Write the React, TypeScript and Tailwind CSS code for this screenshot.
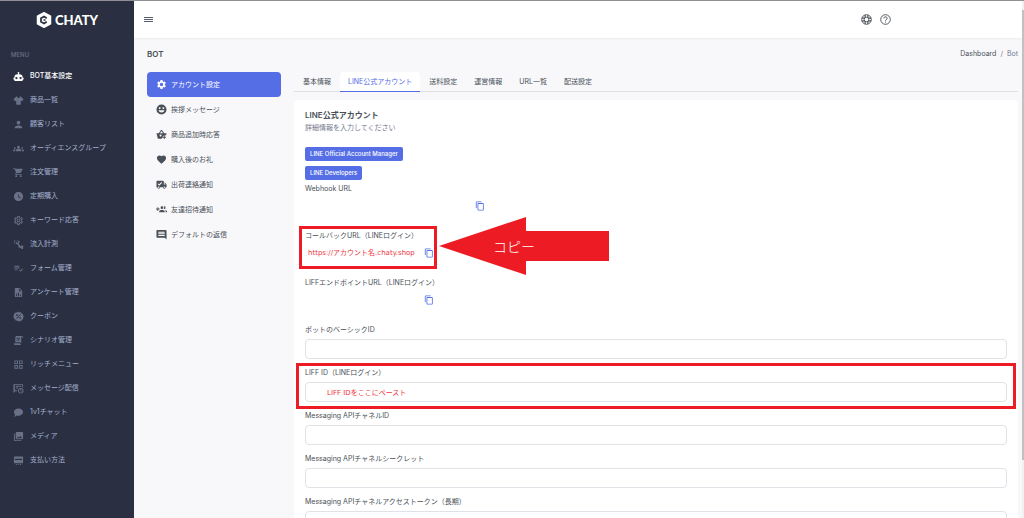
import type { ReactNode } from "react";
import {
  MdPerson,
  MdGroups,
  MdShoppingCart,
  MdWatchLater,
  MdOutlineSettings,
  MdSettings,
  MdPlaylistAddCheck,
  MdOutlineGridView,
  MdPhotoLibrary,
  MdFavorite,
  MdContentCopy,
} from "react-icons/md";

function Icon({ children }: { children: ReactNode }) {
  return (
    <svg viewBox="0 0 24 24" width="1em" height="1em" fill="currentColor" aria-hidden="true">
      {children}
    </svg>
  );
}

const RobotIcon = () => (
  <Icon>
    <path d="M12,2A2,2 0 0,1 14,4C14,4.74 13.6,5.39 13,5.73V7H14A7,7 0 0,1 21,14H22A1,1 0 0,1 23,15V18A1,1 0 0,1 22,19H21V20A2,2 0 0,1 19,22H5A2,2 0 0,1 3,20V19H2A1,1 0 0,1 1,18V15A1,1 0 0,1 2,14H3A7,7 0 0,1 10,7H11V5.73C10.4,5.39 10,4.74 10,4A2,2 0 0,1 12,2M7.5,13A2.5,2.5 0 0,0 5,15.5A2.5,2.5 0 0,0 7.5,18A2.5,2.5 0 0,0 10,15.5A2.5,2.5 0 0,0 7.5,13M16.5,13A2.5,2.5 0 0,0 14,15.5A2.5,2.5 0 0,0 16.5,18A2.5,2.5 0 0,0 19,15.5A2.5,2.5 0 0,0 16.5,13Z" />
  </Icon>
);

const ShirtIcon = () => (
  <Icon>
    <path d="M16,21H8A1,1 0 0,1 7,20V12.07L5.7,13.07C5.31,13.46 4.68,13.46 4.29,13.07L1.46,10.29C1.07,9.9 1.07,9.27 1.46,8.88L7.34,3H9C9.29,4.8 10.4,6.37 12,7.25C13.6,6.37 14.71,4.8 15,3H16.66L22.54,8.88C22.93,9.27 22.93,9.9 22.54,10.29L19.71,13.12C19.32,13.5 18.69,13.5 18.3,13.12L17,12.12V20A1,1 0 0,1 16,21" />
  </Icon>
);

const TrafficIcon = () => (
  <Icon>
    <path d="M2 3h3v3H2zM6 7h3v3H6zM2 9h2v2H2zM8 3h2v2H8zM11 6l2-3 2 2-3 5 4 5h3v-3l4 5-4 5v-3h-4l-6-8H7v-2h3zM12 17h2v2h-2zM18 18h4v4h-4z" />
  </Icon>
);

const FileChartIcon = () => (
  <Icon>
    <path d="M13,9H18.5L13,3.5V9M6,2H14L20,8V20A2,2 0 0,1 18,22H6C4.89,22 4,21.1 4,20V4C4,2.89 4.89,2 6,2M7,20H9V14H7V20M11,20H13V12H11V20M15,20H17V16H15V20Z" />
  </Icon>
);

const CouponIcon = () => (
  <Icon>
    <path
      fillRule="evenodd"
      d="M12 1l2.6 2.1 3.3-.4 1.2 3.1 3.1 1.2-.4 3.3L24 12l-2.2 2.6.4 3.3-3.1 1.2-1.2 3.1-3.3-.4L12 23l-2.6-2.2-3.3.4-1.2-3.1-3.1-1.2.4-3.3L0 12l2.2-2.6-.4-3.3 3.1-1.2L6.1 2.700l3.3.4zM8.500 7a1.700 1.700 0 1 0 .01 0zM15.500 13.500a1.700 1.700 0 1 0 .01 0zM7 15.600L8.400 17 17 8.400 15.600 7z"
    />
  </Icon>
);

const ScriptIcon = () => (
  <Icon>
    <path d="M17.800,20C17.400,21.200 16.300,22 15,22H5C3.300,22 2,20.700 2,19V18H5L14.200,18C14.600,19.200 15.700,20 17,20H17.800M19,2C20.700,2 22,3.300 22,5V6H20V5C20,4.400 19.600,4 19,4C18.400,4 18,4.400 18,5V18H17C16.400,18 16,17.600 16,17V16H5V5C5,3.300 6.300,2 8,2H19M8,6V8H15V6H8M8,10V12H14V10H8Z" />
  </Icon>
);

const MessageClockIcon = () => (
  <Icon>
    <path
      fillRule="evenodd"
      d="M3 2h17a2 2 0 0 1 2 2v6.500a8 8 0 0 0-2-1V4H4v12h5v2H5l-4 4V4a2 2 0 0 1 2-2zM6 6h12v2H6zM6 10h5v2H6zM17 11a6 6 0 1 1 0 12 6 6 0 0 1 0-12zM17 13a4 4 0 1 0 0 8 4 4 0 0 0 0-8zM16.300 14h1.500v2.800l2 1.200-.7 1.200-2.800-1.600z"
    />
  </Icon>
);

const ChatIcon = () => (
  <Icon>
    <path d="M12,3C17.500,3 22,6.580 22,11C22,15.420 17.500,19 12,19C10.760,19 9.570,18.820 8.470,18.500C5.550,21 2,21 2,21C4.330,18.670 4.700,17.100 4.750,16.500C3.050,15.070 2,13.130 2,11C2,6.580 6.500,3 12,3Z" />
  </Icon>
);

const CardIcon = () => (
  <Icon>
    <path
      fillRule="evenodd"
      d="M3 3h18a1 1 0 0 1 1 1v13a1 1 0 0 1-1 1H3a1 1 0 0 1-1-1V4a1 1 0 0 1 1-1zM4 8v3h16V8zM6 20h3v2H6zM11 20h2v2h-2zM15 20h3v2h-3z"
    />
  </Icon>
);

const SmileIcon = () => (
  <Icon>
    <path
      fillRule="evenodd"
      d="M12 1a11 11 0 1 1 0 22 11 11 0 0 1 0-22zM8 7a2 2 0 1 0 .01 0zM16 7a2 2 0 1 0 .01 0zM5.500 13.500a6.700 6.700 0 0 0 13 0z"
    />
  </Icon>
);

const BasketPlusIcon = () => (
  <Icon>
    <path
      fillRule="evenodd"
      d="M11 2h2l5 7h5l-1 5a7 7 0 0 0-9 7H4L1 9h5zM12 4.500L8.700 9h6.600zM10 12a2 2 0 1 0 .01 0zM17 14h2v3h3v2h-3v3h-2v-3h-3v-2h3z"
    />
  </Icon>
);

const TruckCheckIcon = () => (
  <Icon>
    <path
      fillRule="evenodd"
      d="M3 4h12a2 2 0 0 1 2 2v2h3l3 4v6h-2a3 3 0 0 1-6 0H9a3 3 0 0 1-6 0H1V6a2 2 0 0 1 2-2zM7 14.500l6.500-6.500L12 6.600 7 11.600 5 9.600 3.700 11zM17 9.500V12h4l-1.900-2.500zM6 16.500a1.500 1.500 0 1 0 .01 0zM18 16.500a1.500 1.500 0 1 0 .01 0z"
    />
  </Icon>
);

const InviteIcon = () => (
  <Icon>
    <path d="M3 7h2v3h3v2H5v3H3v-3H0v-2h3zM13 5a3 3 0 1 1 0 6 3 3 0 0 1 0-6zM18 5a3 3 0 1 1 0 6c-.4 0-.7 0-1-.1a4.800 4.800 0 0 0 0-5.800c.3-.1.600-.1 1-.1zM13 13c2 0 6 1 6 3v2H7v-2c0-2 4-3 6-3zM19.500 13.200c2 .3 4.500 1.300 4.500 2.800v2h-3v-2c0-1.200-.6-2.100-1.500-2.800z" />
  </Icon>
);

const CommentIcon = () => (
  <Icon>
    <path fillRule="evenodd" d="M3 2h18a2 2 0 0 1 2 2v19l-4-4H3a2 2 0 0 1-2-2V4a2 2 0 0 1 2-2zM5 6v2h14V6zM5 9.500v2h14v-2zM5 13v2h14v-2z" />
  </Icon>
);

const MENU = [
  { label: "BOT基本設定", icon: <RobotIcon />, active: true },
  { label: "商品一覧", icon: <ShirtIcon /> },
  { label: "顧客リスト", icon: <MdPerson /> },
  { label: "オーディエンスグループ", icon: <MdGroups /> },
  { label: "注文管理", icon: <MdShoppingCart /> },
  { label: "定期購入", icon: <MdWatchLater /> },
  { label: "キーワード応答", icon: <MdOutlineSettings /> },
  { label: "流入計測", icon: <TrafficIcon /> },
  { label: "フォーム管理", icon: <MdPlaylistAddCheck /> },
  { label: "アンケート管理", icon: <FileChartIcon /> },
  { label: "クーポン", icon: <CouponIcon /> },
  { label: "シナリオ管理", icon: <ScriptIcon /> },
  { label: "リッチメニュー", icon: <MdOutlineGridView /> },
  { label: "メッセージ配信", icon: <MessageClockIcon /> },
  { label: "1v1チャット", icon: <ChatIcon /> },
  { label: "メディア", icon: <MdPhotoLibrary /> },
  { label: "支払い方法", icon: <CardIcon /> },
];

const SETTINGS = [
  { label: "アカウント設定", icon: <MdSettings />, active: true },
  { label: "挨拶メッセージ", icon: <SmileIcon /> },
  { label: "商品追加時応答", icon: <BasketPlusIcon /> },
  { label: "購入後のお礼", icon: <MdFavorite /> },
  { label: "出荷連絡通知", icon: <TruckCheckIcon /> },
  { label: "友達招待通知", icon: <InviteIcon /> },
  { label: "デフォルトの返信", icon: <CommentIcon /> },
];

const TABS = ["基本情報", "LINE公式アカウント", "送料設定", "運営情報", "URL一覧", "配送設定"];

const FIELDS = [
  { id: "basic-id", label: "ボットのベーシックID" },
  { id: "liff-id", label: "LIFF ID（LINEログイン）", value: "LIFF IDをここにペースト", marked: true },
  { id: "channel-id", label: "Messaging APIチャネルID" },
  { id: "channel-secret", label: "Messaging APIチャネルシークレット" },
  { id: "channel-token", label: "Messaging APIチャネルアクセストークン（長期）" },
];

function Sidebar() {
  return (
    <aside className="w-[134px] shrink-0 bg-[#2a3042]">
      <a href="#" className="flex h-[37px] items-center justify-center gap-[3px] text-white">
        <svg viewBox="0 0 32 32" className="size-4" aria-hidden="true">
          <path d="M16 1.500L29 8.500v15L16 30.500 3 23.500v-15z" fill="#fff" stroke="#fff" strokeWidth="3" strokeLinejoin="round" />
          <path d="M21.500 12.500L16 9l-6 3.500v7l6 3.500 5.500-3.500" fill="none" stroke="#2a3042" strokeWidth="3.500" />
          <path d="M15 16h4" stroke="#2a3042" strokeWidth="3" />
        </svg>
        <span className="font-['Lato'] text-[13px] leading-4 font-black">CHATY</span>
      </a>
      <p className="mt-3 px-[11px] text-[6px] leading-[10px] font-medium text-[#6a7187]">MENU</p>
      <nav className="mt-1">
        {MENU.map((item) => (
          <a
            key={item.label}
            href="#"
            className={`flex h-6 items-center gap-[6px] pl-[13px] ${
              item.active ? "font-medium text-white" : "text-[#a6b0cf]"
            }`}
          >
            <span className={`text-[11px] ${item.active ? "text-white" : "text-[#6a7187]"}`}>{item.icon}</span>
            {item.label}
          </a>
        ))}
      </nav>
    </aside>
  );
}

function Header() {
  return (
    <header className="flex h-[37px] shrink-0 items-center justify-between bg-white pr-[131px] pl-[10px] shadow-xs">
      <button type="button" aria-label="menu">
        <svg viewBox="0 0 9 5" className="h-[5px] w-[9px]" stroke="#555b6d" strokeWidth="1">
          <path d="M0 .5h9M0 2.500h9M0 4.500h9" />
        </svg>
      </button>
      <div className="flex gap-2 text-[#495057]">
        <button type="button" aria-label="support">
          <svg viewBox="0 0 24 24" className="size-[11px]" fill="none" stroke="currentColor" strokeWidth="2">
            <circle cx="12" cy="12" r="10.500" />
            <circle cx="12" cy="12" r="5" />
            <path d="M9 2v6M15 2v6M9 16v6M15 16v6M2 9h6M2 15h6M16 9h6M16 15h6" strokeWidth="2.500" />
          </svg>
        </button>
        <button type="button" aria-label="help">
          <svg viewBox="0 0 24 24" className="size-[11px]" fill="none" stroke="currentColor" strokeWidth="2">
            <circle cx="12" cy="12" r="10.500" />
            <path d="M8.500 9.500a3.500 3.500 0 1 1 5 3.100c-1 .5-1.500 1-1.500 2.200M12 16.500v2.200" />
          </svg>
        </button>
      </div>
    </header>
  );
}

function CopyRow({ label, children, wide }: { label: string; children?: ReactNode; wide?: boolean }) {
  return (
    <div className="mb-5">
      <p className="leading-[10px]">{label}</p>
      <div className="mt-[7px] flex h-[10px] items-center">
        <span className={wide ? "w-[170px]" : "w-[119px]"}>{children}</span>
        <button type="button" aria-label="copy" className="text-[10px] text-[#556ee6]">
          <MdContentCopy />
        </button>
      </div>
    </div>
  );
}

function CopyArrow() {
  return (
    <div className="absolute -top-[14px] left-[134px] h-[58px] w-[170px]">
      <svg viewBox="0 0 170 58" className="absolute inset-0 size-full" fill="#ed1c24" aria-hidden="true">
        <path d="M0 29L87 0v14h83v30H87v14z" />
      </svg>
      <span className="relative block pl-[54px] font-['Noto_Sans_CJK_JP',sans-serif] text-sm leading-[58px] font-light text-white">
        コピー
      </span>
    </div>
  );
}

export default function App() {
  return (
    <div className="flex h-screen overflow-hidden border-t border-[#8f8f94] bg-[#f8f8fb] font-['Inter','Noto_Sans_CJK_JP',sans-serif] text-[7px] leading-[10px] text-[#495057]">
      <Sidebar />
      <div className="flex min-w-0 flex-1 flex-col">
        <Header />
        <main className="pr-1 pl-[13px]">
          <div className="mb-[2px] flex h-8 items-center justify-between">
            <h1 className="text-[8px] font-semibold">BOT</h1>
            <nav aria-label="breadcrumb" className="flex gap-1">
              <a href="#">Dashboard</a>
              <span className="text-[#74788d]">/</span>
              <span className="text-[#74788d]">Bot</span>
            </nav>
          </div>

          <div className="flex gap-[13px]">
            <nav className="w-[134px] shrink-0">
              {SETTINGS.map((item) => (
                <a
                  key={item.label}
                  href="#"
                  className={`flex items-center gap-1 rounded pl-[9px] ${
                    item.active ? "h-[25px] bg-[#556ee6] text-white" : "h-[25px]"
                  }`}
                >
                  <span className="text-[11px]">{item.icon}</span>
                  {item.label}
                </a>
              ))}
            </nav>

            <section className="min-w-0 flex-1">
              <div className="flex gap-px border-b border-[#dddfe4] pl-px">
                {TABS.map((tab, i) => (
                  <a
                    key={tab}
                    href="#"
                    className={`-mb-px flex h-5 items-center px-2 ${
                      i === 1 ? "rounded-t border-b border-[#556ee6] bg-white text-[#556ee6]" : ""
                    }`}
                  >
                    {tab}
                  </a>
                ))}
              </div>

              <div className="mt-2 rounded bg-white px-[11px] pt-[9px] pb-6">
                <h2 className="text-[8px] leading-3 font-semibold">LINE公式アカウント</h2>
                <p className="mt-[2px] text-[#74788d]">詳細情報を入力してください</p>

                <div className="mt-[14px] mb-1 flex flex-col items-start gap-[5px] text-[6px] font-medium text-white">
                  <button type="button" className="h-[14px] rounded-xs bg-[#556ee6] px-[5px]">
                    LINE Official Account Manager
                  </button>
                  <button type="button" className="h-[14px] rounded-xs bg-[#556ee6] px-[5px]">
                    LINE Developers
                  </button>
                </div>

                <CopyRow label="Webhook URL" wide />
                <div className="relative">
                  <CopyRow label="コールバックURL（LINEログイン）">
                    <span className="pl-[3px] font-['DejaVu_Sans','Noto_Sans_CJK_JP',sans-serif] text-[#f0353b]">
                      https://アカウント名.chaty.shop
                    </span>
                  </CopyRow>
                  <div className="pointer-events-none absolute -top-[5px] -left-[6px] h-[43px] w-[138px] border-3 border-[#ed1c24]" />
                  <CopyArrow />
                </div>
                <CopyRow label="LIFFエンドポイントURL（LINEログイン）" />

                <div className="flex flex-col gap-[9px]">
                  {FIELDS.map((field) => (
                    <div key={field.id} className="relative">
                      <label htmlFor={field.id} className="block leading-[10px]">
                        {field.label}
                      </label>
                      <input
                        id={field.id}
                        type="text"
                        defaultValue={field.value}
                        className="mt-1 block h-5 w-full rounded border border-[#dfe2e6] bg-white px-[21px] font-['DejaVu_Sans','Noto_Sans_CJK_JP',sans-serif] text-[#f0353b]"
                      />
                      {field.marked && (
                        <div className="pointer-events-none absolute -inset-x-[9px] -top-[5px] -bottom-[7px] border-3 border-[#ed1c24]" />
                      )}
                    </div>
                  ))}
                </div>
              </div>
            </section>
          </div>
        </main>
      </div>
      <div className="w-[2px] shrink-0 bg-[#f1f1f1] pt-[9px]">
        <div className="h-[450px] bg-[#c1c1c1]" />
      </div>
    </div>
  );
}
